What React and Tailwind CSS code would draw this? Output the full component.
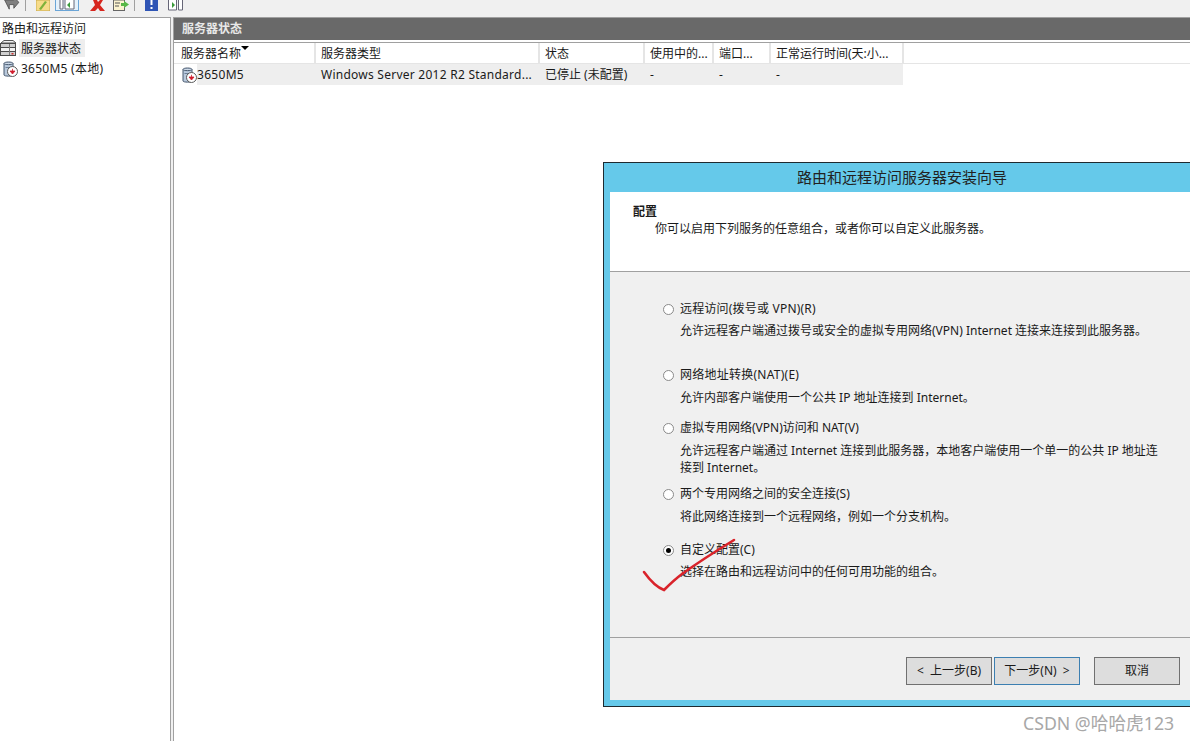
const font = { fontFamily: '"Noto Sans", "Noto Sans CJK SC", sans-serif' };

const columns = [
  { label: "服务器名称", w: "w-[140px]", sort: true },
  { label: "服务器类型", w: "w-[224px]" },
  { label: "状态", w: "w-[105px]" },
  { label: "使用中的...", w: "w-[69px]" },
  { label: "端口...", w: "w-[57px]" },
  { label: "正常运行时间(天:小...", w: "w-[133px]" },
];

const options = [
  { label: "远程访问(拨号或 VPN)(R)", desc: ["允许远程客户端通过拨号或安全的虚拟专用网络(VPN) Internet 连接来连接到此服务器。"], box: "mt-0", gap: "mt-[5px]", track: "tracking-[0.2px]" },
  { label: "网络地址转换(NAT)(E)", desc: ["允许内部客户端使用一个公共 IP 地址连接到 Internet。"], box: "mt-[28px]", gap: "mt-[6px]", track: "tracking-[0.25px]" },
  { label: "虚拟专用网络(VPN)访问和 NAT(V)", desc: ["允许远程客户端通过 Internet 连接到此服务器，本地客户端使用一个单一的公共 IP 地址连", "接到 Internet。"], box: "mt-[14px]", gap: "mt-[6px]" },
  { label: "两个专用网络之间的安全连接(S)", desc: ["将此网络连接到一个远程网络，例如一个分支机构。"], box: "mt-[10px]", gap: "mt-[6px]" },
  { label: "自定义配置(C)", desc: ["选择在路由和远程访问中的任何可用功能的组合。"], box: "mt-[17px]", gap: "mt-[5px]", checked: true },
];

function ServerIcon({ className }) {
  return (
    <svg viewBox="0 0 16 18" className={className}>
      <path d="M2 3.5C2 1.5 11 1.5 11 3.5V15C11 16.5 2 16.5 2 15z" fill="#b9c9dc" stroke="#47586e" />
      <path d="M2 3.5C2 5 11 5 11 3.5" fill="#e4ebf3" stroke="#47586e" />
      <path d="M3.5 7.5h6" stroke="#6d8098" />
      <circle cx="10.5" cy="11.5" r="5" fill="#fff" stroke="#5a5a5a" />
      <path d="M10.5 8.8v2.4M8 11h5l-2.5 3z" fill="#d01c2c" stroke="#d01c2c" strokeWidth="0.8" />
    </svg>
  );
}

function StackIcon() {
  return (
    <svg viewBox="0 0 17 18" className="w-[17px] h-[18px] shrink-0">
      <path d="M4 1.5h9l3 2.5H1z" fill="#efefef" stroke="#555" />
      <rect x="0.5" y="4.5" width="15" height="4" fill="#cfcfcf" stroke="#4a4a4a" />
      <rect x="0.5" y="8.5" width="15" height="4" fill="#f2f2f2" stroke="#4a4a4a" />
      <rect x="0.5" y="12.5" width="15" height="4" fill="#cfcfcf" stroke="#4a4a4a" />
      <path d="M9.5 5v11" stroke="#777" />
      <rect x="11.5" y="14" width="2" height="1.5" fill="#c33" />
    </svg>
  );
}

function Toolbar() {
  return (
    <div className="h-[17px] shrink-0 bg-[#f0f0f0] flex items-end overflow-hidden pl-[4px] pb-[6px]">
      <svg viewBox="0 0 16 12" className="w-[16px] h-[11px] shrink-0">
        <path d="M0 0h10V-3l5.5 5.5L10 9V5H5v5z" fill="#808080" stroke="#555" />
      </svg>
      <div className="w-px h-[11px] bg-[#a0a0a0] ml-[5px]" />
      <svg viewBox="0 0 14 11" className="w-[14px] h-[11px] shrink-0 ml-[10px]">
        <rect width="14" height="11" fill="#f7dc8a" stroke="#c9a94a" />
        <path d="M3 9l6-8 2 1-6 8z" fill="#7fb23a" />
      </svg>
      <div className="w-[24px] h-[11px] ml-[5px] border border-t-0 border-[#6ba5d7] bg-[#e5f1fb] flex items-center justify-center shrink-0">
        <svg viewBox="0 0 16 10" className="w-[16px] h-[10px]">
          <path d="M1 0v9h3V0M6 0v9h9V0" fill="#fff" stroke="#667" />
          <path d="M11 2v6L8 5z" fill="#3a9a3a" />
        </svg>
      </div>
      <svg viewBox="0 0 16 11" className="w-[16px] h-[11px] shrink-0 ml-[11px]">
        <path d="M0 11l5-6-2-5h4l1 2 2-2h3l-3 5 5 6h-5l-2-3-3 3z" fill="#d7261e" />
      </svg>
      <svg viewBox="0 0 16 11" className="w-[16px] h-[11px] shrink-0 ml-[7px]">
        <rect x="0.5" y="0" width="11" height="10.5" fill="#fbf3cf" stroke="#666" />
        <path d="M2 3h5M2 6h4" stroke="#555" />
        <path d="M8 3h3V1l5 3.5L11 8V6H8z" fill="#58b847" />
      </svg>
      <div className="w-px h-[11px] bg-[#a0a0a0] ml-[5px]" />
      <svg viewBox="0 0 13 11" className="w-[13px] h-[11px] shrink-0 ml-[10px]">
        <rect width="13" height="11" fill="#2f55b5" />
        <rect x="5.5" y="0" width="2" height="5" fill="#fff" />
        <rect x="5.5" y="7" width="2" height="2" fill="#fff" />
      </svg>
      <svg viewBox="0 0 15 11" className="w-[15px] h-[11px] shrink-0 ml-[10px]">
        <path d="M0.5 0v10h8V0M10.5 0v10h4V0" fill="#fff" stroke="#667" />
        <path d="M4 2v6l3-3z" fill="#3a9a3a" />
      </svg>
    </div>
  );
}

function Tree() {
  return (
    <div className="w-[171px] shrink-0 bg-white border-r border-[#a0a0a0] border-t border-t-[#a0a0a0] pt-[3px] text-[12px] text-[#1a1a1a]">
      <div className="h-[17px] leading-[16px] pl-[2px]">路由和远程访问</div>
      <div className="flex items-center h-[18px] mt-[1px]">
        <StackIcon />
        <span className="ml-[2px] pl-[2px] pr-[4px] h-[18px] leading-[19px] bg-[#eeeeee]">服务器状态</span>
      </div>
      <div className="flex items-center h-[17px] mt-[3px]">
        <ServerIcon className="w-[16px] h-[18px] ml-[2px] shrink-0" />
        <span className="ml-[3px] tracking-[0.25px]">3650M5 (本地)</span>
      </div>
    </div>
  );
}

function ServerTable() {
  return (
    <div className="flex-1 min-w-0 border-t border-t-[#a0a0a0] border-l border-l-[#a0a0a0] bg-white text-[12px] text-[#1a1a1a]">
      <div className="h-[22px] bg-[#696969] text-[#e8e8e8] font-bold leading-[22px] pl-[8px]">服务器状态</div>
      <div className="h-[3px] border-b border-[#a0a0a0]" />
      <div className="flex h-[21px] pl-[2px] border-b border-[#e5e5e5]">
        {columns.map((c) => (
          <div key={c.label} className={`${c.w} relative shrink-0 border-r-2 border-[#e5e5e5] pl-[5px] leading-[22px] whitespace-nowrap overflow-hidden`}>
            {c.label}
            {c.sort && <span className="absolute left-[65px] top-[3px] w-0 h-0 border-x-[4px] border-x-transparent border-t-[4px] border-t-black" />}
          </div>
        ))}
      </div>
      <div className="flex items-center h-[21px] w-[729px]">
        <div className="w-[141px] shrink-0 flex items-center pl-[7px] h-full">
          <ServerIcon className="w-[16px] h-[18px] shrink-0" />
          <span className="bg-[#eeeeee] h-full leading-[21px] flex-1 tracking-[0.3px]">3650M5</span>
        </div>
        <div className="w-[224px] shrink-0 bg-[#eeeeee] h-full leading-[21px] pl-[6px] tracking-[0.25px] whitespace-nowrap">Windows Server 2012 R2 Standard...</div>
        <div className="w-[105px] shrink-0 bg-[#eeeeee] h-full leading-[21px] pl-[6px]">已停止 (未配置)</div>
        <div className="w-[69px] shrink-0 bg-[#eeeeee] h-full leading-[21px] pl-[6px]">-</div>
        <div className="w-[57px] shrink-0 bg-[#eeeeee] h-full leading-[21px] pl-[6px]">-</div>
        <div className="w-[133px] shrink-0 bg-[#eeeeee] h-full leading-[21px] pl-[6px]">-</div>
      </div>
    </div>
  );
}

function Radio({ checked }) {
  return (
    <span className="w-[11px] h-[11px] shrink-0 rounded-full border border-[#8a8a8a] bg-white flex items-center justify-center">
      {checked && <span className="w-[5px] h-[5px] rounded-full bg-black" />}
    </span>
  );
}

function Wizard() {
  return (
    <div className="absolute left-[603px] top-[162px] w-[598px] h-[545px] border border-[#1e2a30] bg-[#65c9ea] flex flex-col text-[12px] text-[#1a1a1a]">
      <div className="h-[29px] shrink-0 text-center text-[15px] leading-[29px] text-[#222]">路由和远程访问服务器安装向导</div>
      <div className="flex-1 mx-[6px] mb-[6px] bg-[#f0f0f0] flex flex-col min-h-0">
        <div className="h-[80px] shrink-0 bg-white border-b border-[#a0a0a0] pl-[23px] pt-[12px]">
          <div className="font-bold leading-[16px]">配置</div>
          <div className="pl-[22px] leading-[16px] mt-[1px]">你可以启用下列服务的任意组合，或者你可以自定义此服务器。</div>
        </div>
        <div className="h-[366px] shrink-0 border-b border-[#a0a0a0] pl-[53px] pt-[29px]">
          {options.map((o) => (
            <div key={o.label} className={o.box}>
              <div className="flex items-center h-[16px]">
                <Radio checked={o.checked} />
                <span className={`ml-[6px] ${o.track || ""}`}>{o.label}</span>
              </div>
              <div className={`pl-[17px] leading-[17px] ${o.gap}`}>
                {o.desc.map((d) => (
                  <div key={d} className="whitespace-nowrap">{d}</div>
                ))}
              </div>
            </div>
          ))}
        </div>
        <div className="flex-1 flex items-start pt-[19px] pl-[296px]">
          <button className="w-[86px] h-[28px] bg-[#dddddd] border border-[#707070] whitespace-pre">&lt;  上一步(B)</button>
          <button className="w-[86px] h-[28px] ml-[2px] bg-[#dddddd] border border-[#3c7fb1] whitespace-pre">下一步(N)  &gt;</button>
          <button className="w-[86px] h-[28px] ml-[14px] bg-[#dddddd] border border-[#707070]">取消</button>
        </div>
      </div>
    </div>
  );
}

export default function App() {
  return (
    <div className="relative w-[1190px] h-[741px] overflow-hidden bg-[#f0f0f0] flex flex-col" style={font}>
      <Toolbar />
      <div className="flex-1 min-h-0 flex gap-[2px]">
        <Tree />
        <ServerTable />
      </div>
      <Wizard />
      {/* red tick drawn over the screenshot */}
      <svg viewBox="0 0 100 60" className="absolute left-[640px] top-[537px] w-[100px] h-[60px]">
        <path d="M4 35C9 42 16 50 24 53C28 49 34 43 42 37C56 27 76 14 94 3" fill="none" stroke="#d9232b" strokeWidth="2.6" strokeLinecap="round" />
      </svg>
      <div className="absolute left-[1023px] top-[711px] text-[17.7px] leading-[24px] text-[#a8a8a8] whitespace-nowrap">CSDN @哈哈虎123</div>
    </div>
  );
}
